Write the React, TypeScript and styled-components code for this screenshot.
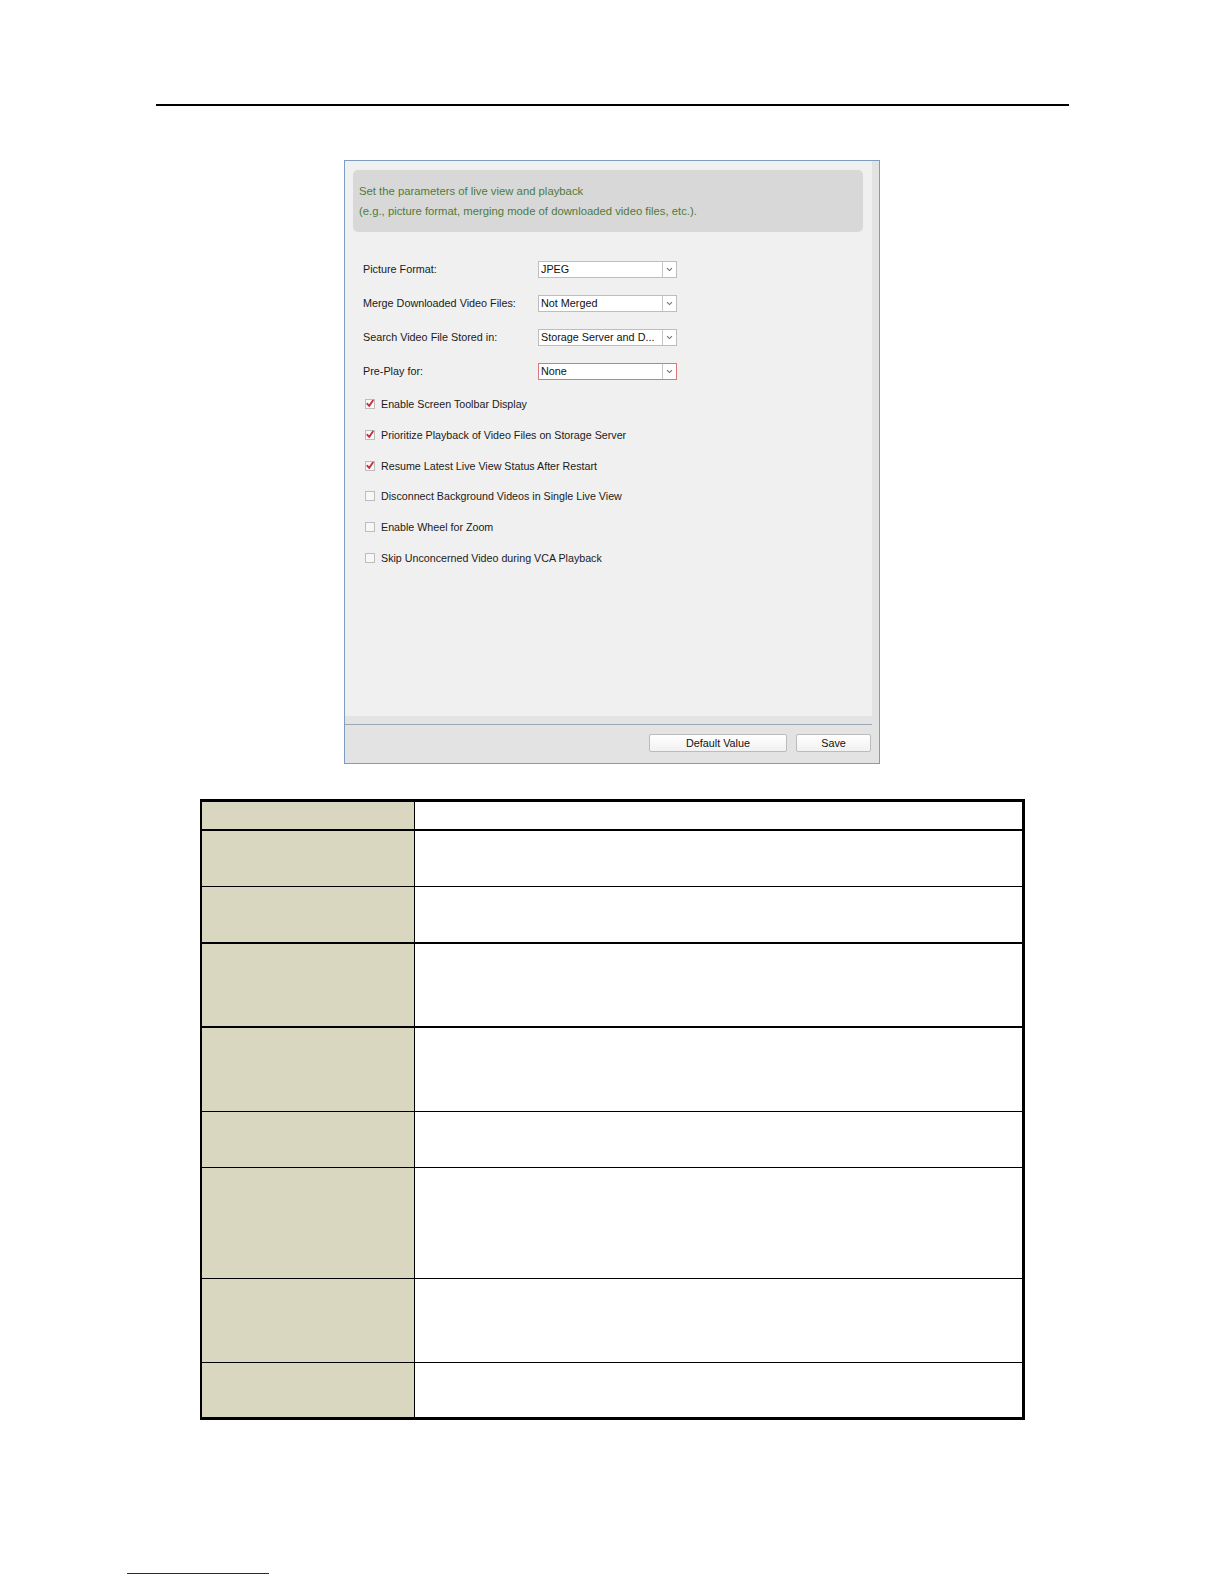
import React from "react";
import styled, { createGlobalStyle } from "styled-components";

const GlobalStyle = createGlobalStyle`
  html, body { margin: 0; padding: 0; background: #ffffff; }
  body { font-family: "Liberation Sans", Arial, sans-serif; color: #1a1a1a; }
`;

const Page = styled.div`
  width: 1224px;
  min-height: 1584px;
  box-sizing: border-box;
  padding-top: 104px;
  display: flex;
  flex-direction: column;
  align-items: center;
`;

const HeaderRule = styled.div`
  width: 913px;
  height: 0;
  border-top: 2px solid #000;
`;

const Panel = styled.div`
  margin-top: 54px;
  width: 536px;
  box-sizing: border-box;
  border: 1px solid #7d9cc2;
  background: #e3e3e3;
  display: flex;
  flex-direction: column;
`;

const Body = styled.div`
  height: 555px;
  margin-right: 7px;
  background: #f0f0f0;
  box-sizing: border-box;
  padding: 9px 9px 0 8px;
  display: flex;
  flex-direction: column;
`;

const InfoBox = styled.div`
  background: #d8d8d8;
  border-radius: 5px;
  padding: 11px 0 11px 6px;
  color: #4f7b3b;
  font-size: 11.3px;
  line-height: 20px;
`;

const Form = styled.div`
  margin-top: 20px;
  padding-left: 10px;
  display: flex;
  flex-direction: column;
`;

const FormRow = styled.div`
  height: 34px;
  display: flex;
  align-items: center;
`;

const Label = styled.div`
  width: 175px;
  font-size: 10.8px;
  color: #1a1a1a;
`;

const Select = styled.div<{ $invalid?: boolean }>`
  width: 139px;
  height: 17px;
  box-sizing: border-box;
  border: 1px solid ${(p) => (p.$invalid ? "#d9777d" : "#bdbdbd")};
  background: #fff;
  display: flex;
  align-items: stretch;
`;

const SelectValue = styled.div`
  flex: 1;
  padding-left: 2px;
  font-size: 10.8px;
  line-height: 15px;
  color: #111;
  white-space: nowrap;
  overflow: hidden;
`;

const SelectArrow = styled.div`
  width: 13px;
  border-left: 1px solid #c6c6c6;
  display: flex;
  align-items: center;
  justify-content: center;
`;

const CheckList = styled.div`
  margin-top: 0.6px;
  padding-left: 1px;
  display: flex;
  flex-direction: column;
`;

const CheckRow = styled.div`
  height: 30.8px;
  display: flex;
  align-items: center;
  gap: 5px;
  font-size: 10.7px;
  color: #1a1a1a;
`;

const Footer = styled.div`
  margin-top: 8px;
  margin-right: 7px;
  border-top: 1px solid #9ca7b5;
  padding: 9px 1px 11px 0;
  display: flex;
  justify-content: flex-end;
  gap: 9px;
`;

const Button = styled.div<{ $w: number }>`
  width: ${(p) => p.$w}px;
  height: 18px;
  box-sizing: border-box;
  border: 1px solid #bcbcbc;
  border-radius: 2px;
  background: linear-gradient(#ffffff, #f1f1f1);
  font-size: 10.8px;
  line-height: 16px;
  text-align: center;
  color: #111;
`;

const TableFrame = styled.div`
  margin-top: 35px;
  width: 825px;
  box-sizing: border-box;
  border-top: 3px solid #000;
  border-bottom: 3px solid #000;
  border-left: 2px solid #000;
  border-right: 3px solid #000;
  display: flex;
  flex-direction: column;
`;

const TRow = styled.div<{ $top: number; $h: number }>`
  display: flex;
  height: ${(p) => p.$h}px;
  border-top: ${(p) => p.$top}px solid #000;
`;

const KeyCell = styled.div`
  width: 212px;
  border-right: 1px solid #000;
  background: #dad7c1;
`;

const ValueCell = styled.div`
  flex: 1;
  background: #fff;
`;

const FootLink = styled.div`
  align-self: flex-start;
  margin-left: 127px;
  margin-top: 153px;
  width: 142px;
  height: 0;
  border-top: 1px solid #1c1ca8;
`;

const Chevron = () => (
  <svg width="7" height="5" viewBox="0 0 7 5">
    <path d="M1 1.2 L3.5 3.6 L6 1.2" fill="none" stroke="#707070" strokeWidth="1.1" />
  </svg>
);

const Check = ({ checked }: { checked: boolean }) => (
  <svg width="12" height="12" viewBox="0 0 12 12">
    <rect x="1.5" y="1.5" width="9" height="9" fill="#f7f7f7" stroke="#bdbdbd" strokeWidth="1" />
    {checked && (
      <path d="M3.3 5.8 L5.2 8 L8.9 2.6" fill="none" stroke="#c92b35" strokeWidth="1.8" strokeLinecap="round" strokeLinejoin="round" />
    )}
  </svg>
);

const selects = [
  { label: "Picture Format:", value: "JPEG" },
  { label: "Merge Downloaded Video Files:", value: "Not Merged" },
  { label: "Search Video File Stored in:", value: "Storage Server and D..." },
  { label: "Pre-Play for:", value: "None", invalid: true },
];

const checks = [
  { label: "Enable Screen Toolbar Display", checked: true },
  { label: "Prioritize Playback of Video Files on Storage Server", checked: true },
  { label: "Resume Latest Live View Status After Restart", checked: true },
  { label: "Disconnect Background Videos in Single Live View", checked: false },
  { label: "Enable Wheel for Zoom", checked: false },
  { label: "Skip Unconcerned Video during VCA Playback", checked: false },
];

const rows = [
  { top: 0, h: 27 },
  { top: 2, h: 55 },
  { top: 1, h: 55 },
  { top: 2, h: 82 },
  { top: 2, h: 83 },
  { top: 1, h: 55 },
  { top: 1, h: 110 },
  { top: 1, h: 83 },
  { top: 1, h: 54 },
];

export default function App() {
  return (
    <>
      <GlobalStyle />
      <Page>
        <HeaderRule />
        <Panel>
          <Body>
            <InfoBox>
              <div>Set the parameters of live view and playback</div>
              <div>(e.g., picture format, merging mode of downloaded video files, etc.).</div>
            </InfoBox>
            <Form>
              {selects.map((s) => (
                <FormRow key={s.label}>
                  <Label>{s.label}</Label>
                  <Select $invalid={s.invalid}>
                    <SelectValue>{s.value}</SelectValue>
                    <SelectArrow>
                      <Chevron />
                    </SelectArrow>
                  </Select>
                </FormRow>
              ))}
              <CheckList>
                {checks.map((c) => (
                  <CheckRow key={c.label}>
                    <Check checked={c.checked} />
                    <span>{c.label}</span>
                  </CheckRow>
                ))}
              </CheckList>
            </Form>
          </Body>
          <Footer>
            <Button $w={138}>Default Value</Button>
            <Button $w={75}>Save</Button>
          </Footer>
        </Panel>
        <TableFrame>
          {rows.map((r, i) => (
            <TRow key={i} $top={r.top} $h={r.h}>
              <KeyCell />
              <ValueCell />
            </TRow>
          ))}
        </TableFrame>
        <FootLink />
      </Page>
    </>
  );
}
